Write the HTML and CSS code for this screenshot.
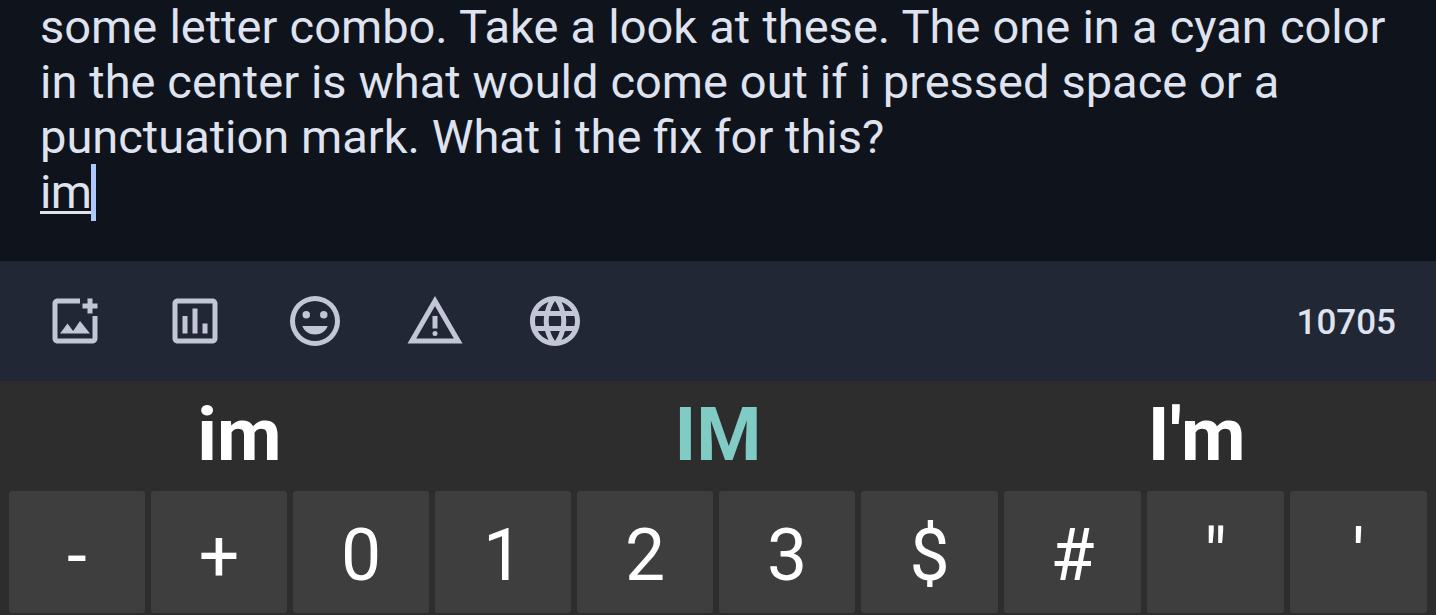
FILE: index.html
```html
<!DOCTYPE html>
<html lang="en">
<head>
    <meta charset="UTF-8">
    <meta name="viewport" content="width=device-width, initial-scale=1.0">
    <title>Compose</title>
    <link rel="stylesheet" href="styles.css">
</head>
<body>

    <div class="editor">
        <div class="line wide">some letter combo. Take a look at these. The one in a cyan color</div>
        <div class="line medium">in the center is what would come out if i pressed space or a</div>
        <div class="line">punctuation mark. What i the fix for this?</div>
        <div class="typing"><span class="composing">im</span><span class="cursor"></span></div>
    </div>

    <div class="toolbar">
        <button class="tool" aria-label="Add image">
            <svg viewBox="0 0 24 24">
                <path d="M14 3H5c-1.1 0-2 .9-2 2v14c0 1.1.9 2 2 2h14c1.1 0 2-.9 2-2v-9h-2v9H5V5h9z"/>
                <path d="M17 3h2v2h2v2h-2v2h-2V7h-2V5h2zM6 17l3-4 2.25 3L14 12l4 5z"/>
            </svg>
        </button>
        <button class="tool" aria-label="Add poll">
            <svg viewBox="0 0 24 24">
                <path d="M19 3H5c-1.1 0-2 .9-2 2v14c0 1.1.9 2 2 2h14c1.1 0 2-.9 2-2V5c0-1.1-.9-2-2-2zm0 16H5V5h14v14zM7 10h2v7H7zm4-3h2v10h-2zm4 6h2v4h-2z"/>
            </svg>
        </button>
        <button class="tool" aria-label="Emoji">
            <svg viewBox="0 0 24 24">
                <circle cx="8.5" cy="9.5" r="1.5"/>
                <circle cx="15.5" cy="9.5" r="1.5"/>
                <path d="M12 2a10 10 0 1 0 0 20 10 10 0 0 0 0-20zm0 18a8 8 0 1 1 0-16 8 8 0 0 1 0 16zM12 17.4c2.33 0 4.31-1.4 5.11-3.4H6.89c.8 2 2.78 3.4 5.11 3.4z"/>
            </svg>
        </button>
        <button class="tool" aria-label="Content warning">
            <svg viewBox="0 0 24 24">
                <path d="M12 2L1 21h22L12 2zm0 3.99L19.53 19H4.47L12 5.99zM11 10h2v5h-2z"/>
                <circle cx="12" cy="17" r="1"/>
            </svg>
        </button>
        <button class="tool" aria-label="Language">
            <svg viewBox="0 0 24 24">
                <path d="M11.99 2C6.47 2 2 6.48 2 12s4.47 10 9.99 10C17.52 22 22 17.52 22 12S17.52 2 11.99 2zm6.93 6h-2.95c-.32-1.25-.78-2.45-1.38-3.56 1.84.63 3.37 1.91 4.33 3.56zM12 4.04c.83 1.2 1.48 2.53 1.91 3.96h-3.82c.43-1.43 1.08-2.76 1.91-3.96zM4.26 14C4.1 13.36 4 12.69 4 12s.1-1.36.26-2h3.38c-.08.66-.14 1.32-.14 2s.06 1.34.14 2H4.26zm.82 2h2.95c.32 1.25.78 2.45 1.38 3.56-1.84-.63-3.37-1.9-4.33-3.56zm2.95-8H5.08c.96-1.66 2.49-2.93 4.33-3.56C8.81 5.55 8.35 6.75 8.03 8zM12 19.96c-.83-1.2-1.48-2.53-1.91-3.96h3.82c-.43 1.43-1.08 2.76-1.91 3.96zM14.34 14H9.66c-.09-.66-.16-1.32-.16-2s.07-1.35.16-2h4.68c.09.65.16 1.32.16 2s-.07 1.34-.16 2zm.25 5.56c.6-1.11 1.06-2.31 1.38-3.56h2.95c-.96 1.65-2.49 2.93-4.33 3.56zM16.36 14c.08-.66.14-1.32.14-2s-.06-1.34-.14-2h3.38c.16.64.26 1.31.26 2s-.1 1.36-.26 2h-3.38z"/>
            </svg>
        </button>
        <span class="count">10705</span>
    </div>

    <div class="keyboard">
        <div class="suggestions">
            <span>im</span>
            <span class="active">IM</span>
            <span>I'm</span>
        </div>
        <div class="keys">
            <div class="key">-</div>
            <div class="key">+</div>
            <div class="key">0</div>
            <div class="key">1</div>
            <div class="key">2</div>
            <div class="key">3</div>
            <div class="key">$</div>
            <div class="key">#</div>
            <div class="key">"</div>
            <div class="key">'</div>
        </div>
    </div>

</body>
</html>
```
FILE: styles.css
```css
body {
    font-family: Roboto, sans-serif;
    background-color: #2d2d2d;
    margin: 0;
    height: 615px;
    overflow: hidden;
}
.editor {
    box-sizing: border-box;
    height: 261px;
    padding-left: 40px;
    background-color: #0f131c;
    color: #dfe2ef;
    font-size: 47px;
    line-height: 55px;
    white-space: nowrap;
    overflow: hidden;
}
.line {
    word-spacing: 0.1px;
}
.line.medium {
    word-spacing: 0.23px;
}
.line.wide {
    word-spacing: 0.53px;
}
.line:first-child {
    margin-top: -1px;
}
.typing {
    display: flex;
}
.composing {
    letter-spacing: -0.8px;
    text-decoration: underline;
    text-decoration-thickness: 3px;
    text-underline-offset: 3px;
}
.cursor {
    width: 5px;
    height: 57px;
    background-color: #adc7ff;
}
.toolbar {
    box-sizing: border-box;
    height: 120px;
    padding: 0 40px 0 15px;
    display: flex;
    align-items: center;
    background-color: #212734;
}
.tool {
    width: 120px;
    height: 120px;
    padding: 0;
    border: none;
    background: none;
    display: flex;
    justify-content: center;
    align-items: center;
}
.tool svg {
    width: 60px;
    height: 60px;
    fill: #c3c6d7;
}
.count {
    margin-left: auto;
    padding-top: 2px;
    color: #dfe2ef;
    font-size: 35px;
    font-weight: 500;
}
.keyboard {
    height: 234px;
    background-color: #2d2d2d;
}
.suggestions {
    display: grid;
    grid-template-columns: repeat(3, 1fr);
    height: 110px;
    line-height: 107px;
    color: #fff;
    font-size: 74.5px;
    font-weight: 700;
    text-align: center;
}
.suggestions .active {
    color: #80cbc4;
}
.keys {
    display: grid;
    grid-template-columns: repeat(6, 136px) repeat(4, 137px);
    gap: 6px;
    padding-left: 9px;
}
.key {
    height: 122px;
    border-radius: 3px;
    background-color: #3e3e3e;
    color: #fff;
    font-size: 71.5px;
    line-height: 129px;
    text-align: center;
}
```
